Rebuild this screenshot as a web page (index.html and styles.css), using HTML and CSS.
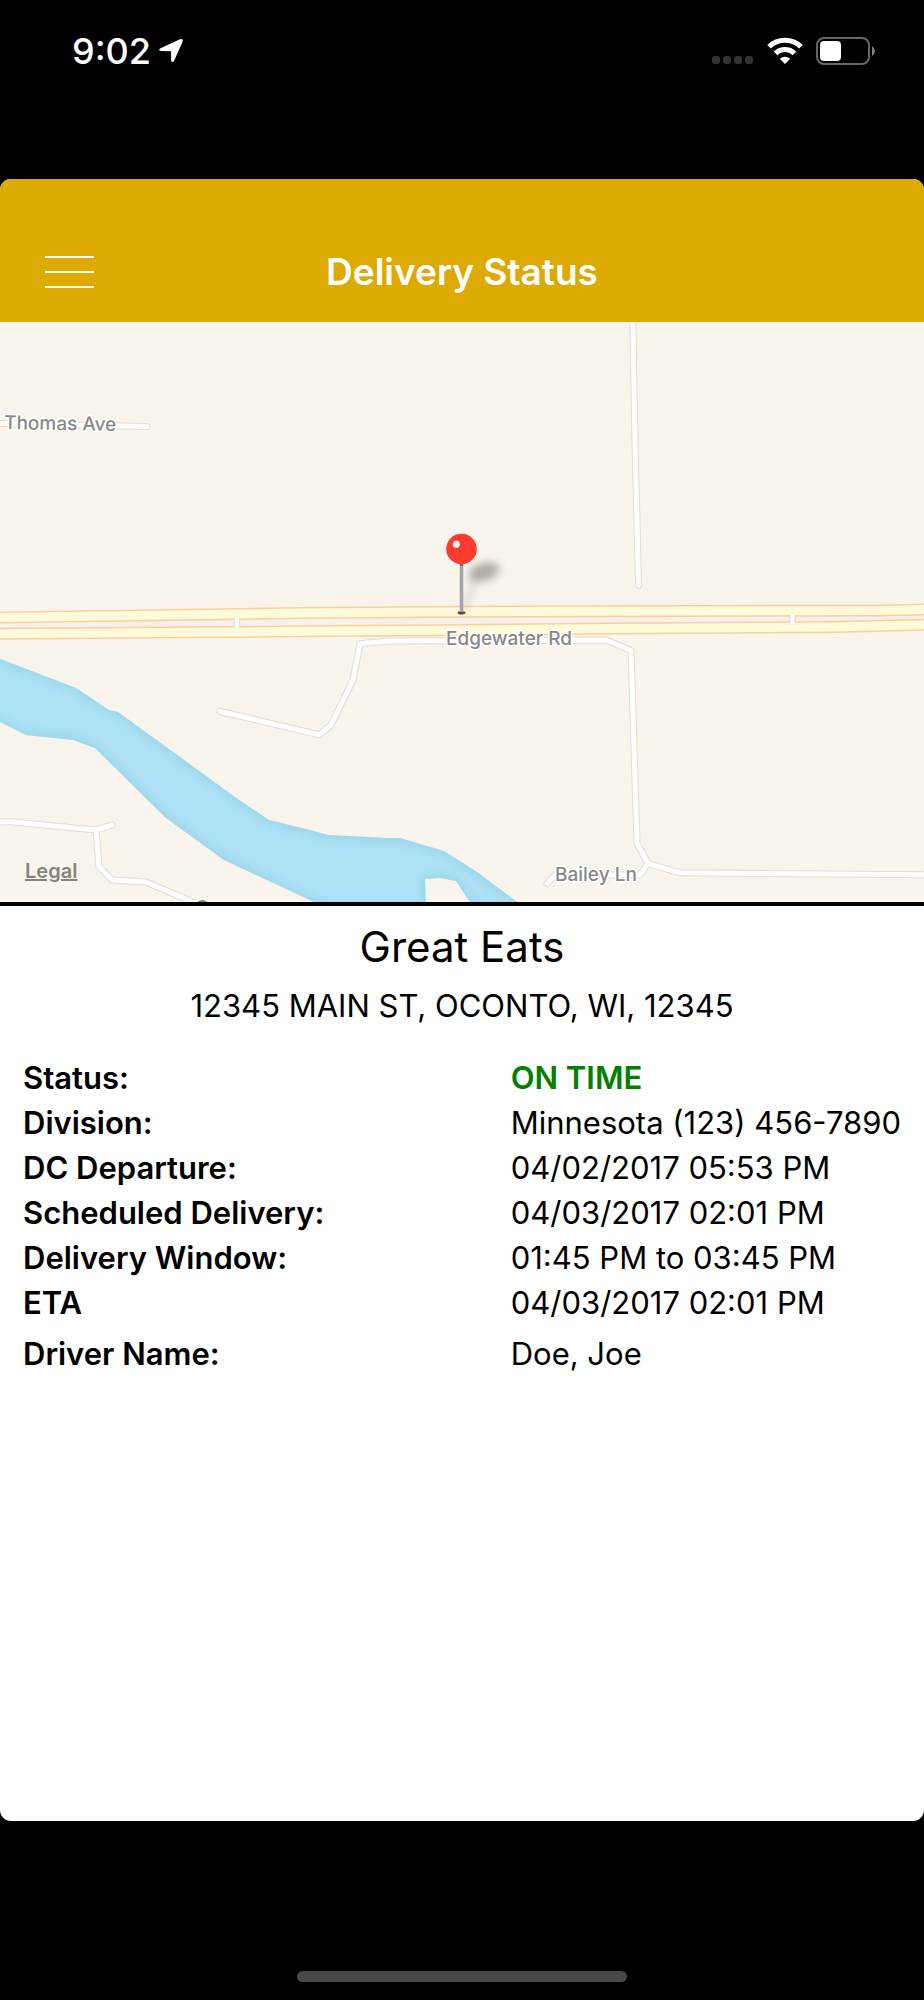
FILE: index.html
```html
<!DOCTYPE html>
<html lang="en">
<head>
    <meta charset="UTF-8">
    <meta name="viewport" content="width=device-width, initial-scale=1.0">
    <title>Delivery Status</title>
    <link rel="stylesheet" href="styles.css">
</head>
<body>

    <div class="status-bar">
        <div class="status-left">
            <span class="time">9:02</span>
            <svg class="icon-location" width="26" height="26" viewBox="0 0 26 26">
                <path d="M2 10.500L22 1.300Q25.400 0.300 24.600 3.700L16 23Q14.700 25 13.200 23L13 13.200L2.800 13Q0 12.300 2 10.500Z" fill="#fff"/>
            </svg>
        </div>
        <div class="status-right">
            <svg width="42" height="28" viewBox="0 0 42 28" fill="#333">
                <rect x="0" y="19" width="8" height="8" rx="3"/>
                <rect x="11" y="19" width="8" height="8" rx="3"/>
                <rect x="22" y="19" width="8" height="8" rx="3"/>
                <rect x="33" y="19" width="8" height="8" rx="3"/>
            </svg>
            <svg width="38" height="28" viewBox="0 0 38 28">
                <path d="M3 9.700A23 23 0 0 1 35 9.700" fill="none" stroke="#fff" stroke-width="5"/>
                <path d="M9.500 16.300A14 14 0 0 1 28.500 16.300" fill="none" stroke="#fff" stroke-width="5"/>
                <path d="M19 27L13.800 21.800A7.500 7.500 0 0 1 24.200 21.800Z" fill="#fff"/>
            </svg>
            <svg width="60" height="28" viewBox="0 0 60 28">
                <rect x="1" y="1" width="52" height="26" rx="7" fill="none" stroke="#666" stroke-width="2"/>
                <rect x="4" y="4" width="21" height="20" rx="4" fill="#fff"/>
                <path d="M56 9Q59 11 59 14Q59 17 56 19Z" fill="#808080"/>
            </svg>
        </div>
    </div>

    <div class="app">
        <header class="header">
            <button class="menu-button" type="button" aria-label="Menu">
                <span class="menu-line"></span>
                <span class="menu-line"></span>
                <span class="menu-line"></span>
            </button>
            <h1>Delivery Status</h1>
        </header>

        <div class="map">
            <svg class="map-canvas" viewBox="0 0 924 580" preserveAspectRatio="xMidYMid slice">
                <defs>
                    <path id="river" d="M-10 333L3 338L76 366L109 388L118 390L235 475L269 498L310 508L328 513L388 516L400 516L444 529L477 550L517 580L530 592L478 592L470 580L456 559L440 556L425 557L426 592L340 592L314 580L224 538L166 496L95 426L73 418L26 413L-10 395Z"/>
                    <clipPath id="river-clip"><use href="#river"/></clipPath>
                    <filter id="blur-edge"><feGaussianBlur stdDeviation="4"/></filter>
                    <filter id="blur-shadow" x="-50%" y="-50%" width="200%" height="200%"><feGaussianBlur stdDeviation="4"/></filter>
                    <path id="roads" d="M632.700 -8L635 118L638.500 263.500 M-8 101.300L147 104.500 M220 389.500L319 412.700L331 403L353 358L360 321.700L388 319L606 318L631 328.500L637 521L648 541.500L679 550.700L940 553 M648 541.500L640 552.700L555 553L547 561.500 M-8 500.500L8 499.500L96 508L112 503 M96 508L99 544.500L112 558L146 560L200 583"/>
                    <path id="highway" d="M-8 295.700L300 291L460 289.800L610 289.200L880 288.500L940 287 M-8 311.700L300 309.300L460 308L610 306.500L835 305L940 302.300"/>
                </defs>

                <!-- River -->
                <use href="#river" fill="#ade1f5"/>
                <g clip-path="url(#river-clip)">
                    <use href="#river" fill="none" stroke="#98d4e6" stroke-width="7" filter="url(#blur-edge)"/>
                </g>

                <!-- Small roads -->
                <use href="#roads" class="road-edge"/>
                <use href="#roads" class="road"/>

                <!-- Highway -->
                <path d="M-8 303.500L300 300L460 299L610 298L880 297L940 295" fill="none" stroke="#f6f1ea" stroke-width="12"/>
                <use href="#highway" class="highway-edge"/>
                <path d="M237 299V306M792.500 295V300" stroke="#e3dcd3" stroke-width="6.500"/>
                <use href="#highway" class="highway"/>
                <path d="M237 296V308M792.500 292V302" stroke="#fff" stroke-width="4"/>

                <!-- Street names -->
                <g class="street-name">
                    <text x="4" y="107" transform="rotate(1 4 107)">Thomas Ave</text>
                    <text x="446" y="323">Edgewater Rd</text>
                    <text x="555" y="559">Bailey Ln</text>
                    <text x="195" y="592">C</text>
                </g>

                <!-- Pin -->
                <ellipse cx="484" cy="250" rx="16" ry="9" transform="rotate(-15 484 250)" fill="#000" opacity="0.300" filter="url(#blur-shadow)"/>
                <path d="M463 290L475 258" stroke="#000" stroke-width="5" opacity="0.120" filter="url(#blur-shadow)"/>
                <ellipse cx="461.500" cy="290.700" rx="4" ry="1.800" fill="#55524a"/>
                <path d="M461.500 241V290" stroke="#a3a5a8" stroke-width="3.500"/>
                <path d="M461.500 241V244" stroke="#77777b" stroke-width="3.500"/>
                <circle cx="461.500" cy="227" r="15.300" fill="#ff3b30"/>
                <circle cx="456.300" cy="222.300" r="3.500" fill="#fff"/>
            </svg>
            <a class="legal" href="#legal">Legal</a>
        </div>

        <main class="details">
            <h2>Great Eats</h2>
            <p class="address">12345 MAIN ST, OCONTO, WI, 12345</p>
            <table class="info">
                <tr>
                    <th scope="row">Status:</th>
                    <td class="on-time">ON TIME</td>
                </tr>
                <tr>
                    <th scope="row">Division:</th>
                    <td>Minnesota (123) 456-7890</td>
                </tr>
                <tr>
                    <th scope="row">DC Departure:</th>
                    <td>04/02/2017 05:53 PM</td>
                </tr>
                <tr>
                    <th scope="row">Scheduled Delivery:</th>
                    <td>04/03/2017 02:01 PM</td>
                </tr>
                <tr>
                    <th scope="row">Delivery Window:</th>
                    <td>01:45 PM to 03:45 PM</td>
                </tr>
                <tr>
                    <th scope="row">ETA</th>
                    <td>04/03/2017 02:01 PM</td>
                </tr>
                <tr class="driver">
                    <th scope="row">Driver Name:</th>
                    <td>Doe, Joe</td>
                </tr>
            </table>
        </main>
    </div>

    <div class="home-area">
        <div class="home-indicator"></div>
    </div>

</body>
</html>
```
FILE: styles.css
```css
* {
    box-sizing: border-box;
}
body {
    font-family: Inter, "Liberation Sans", sans-serif;
    background-color: #000;
    color: #000;
    display: flex;
    flex-direction: column;
    min-height: 100vh;
    margin: 0;
}

/* Phone status bar */
.status-bar {
    display: flex;
    justify-content: space-between;
    align-items: flex-start;
    height: 179px;
    padding: 36px 48px 0 72px;
}
.status-left, .status-right {
    display: flex;
    align-items: center;
    height: 30px;
}
.status-left {
    gap: 7px;
}
.status-right {
    gap: 12px;
}
.time {
    color: #fff;
    font-size: 36px;
    font-weight: 500;
    line-height: 30px;
}

/* App card */
.app {
    flex: 1;
    background-color: #fff;
    border-radius: 11px;
    overflow: hidden;
}
.header {
    display: grid;
    grid-template-columns: 1fr auto 1fr;
    align-items: center;
    background-color: #dcaa00;
    height: 143px;
    padding: 43px 45px 0;
}
.header h1 {
    color: #fff;
    font-size: 37px;
    font-weight: 600;
    line-height: 44px;
    margin: 0;
}
.menu-button {
    display: flex;
    flex-direction: column;
    justify-content: space-between;
    width: 49px;
    height: 32px;
    padding: 0;
    background: none;
    border: none;
    cursor: pointer;
}
.menu-line {
    width: 100%;
    height: 2px;
    background-color: #fff;
}

/* Map */
.map {
    position: relative;
    background-color: #f9f5ed;
    border-bottom: 4px solid #000;
}
.map-canvas {
    display: block;
    width: 100%;
    height: 580px;
}
.road, .road-edge, .highway, .highway-edge {
    fill: none;
    stroke-linecap: round;
    stroke-linejoin: round;
}
.road-edge {
    stroke: #e3dcd2;
    stroke-width: 7px;
}
.road {
    stroke: #fff;
    stroke-width: 5px;
}
.highway-edge {
    stroke: #f9d09c;
    stroke-width: 12px;
}
.highway {
    stroke: #fdfbda;
    stroke-width: 9px;
}
.street-name {
    fill: #88888a;
    stroke: #fff;
    stroke-width: 3px;
    stroke-linejoin: round;
    paint-order: stroke;
    font-size: 19px;
    font-weight: 500;
}
.legal {
    position: absolute;
    left: 25px;
    bottom: 19px;
    color: #858580;
    font-size: 20px;
    font-weight: 600;
    line-height: 24px;
}

/* Delivery details */
.details {
    padding: 14px 23px 40px;
}
.details h2 {
    font-size: 42px;
    font-weight: 400;
    line-height: 54px;
    text-align: center;
    margin: 0;
}
.address {
    font-size: 31px;
    line-height: 45px;
    text-align: center;
    margin: 9px 0 27px;
}
.info {
    width: 100%;
    border-collapse: collapse;
    font-size: 31px;
    line-height: 45px;
}
.info th, .info td {
    padding: 0;
    text-align: left;
    white-space: nowrap;
}
.info th {
    width: 56%;
    font-weight: 600;
}
.info .on-time {
    color: #008000;
    font-weight: 600;
}
.info .driver th, .info .driver td {
    padding-top: 6px;
}

/* Home indicator */
.home-area {
    display: flex;
    justify-content: center;
    align-items: flex-end;
    height: 179px;
    padding-bottom: 18px;
}
.home-indicator {
    width: 330px;
    height: 11px;
    border-radius: 6px;
    background-color: #484848;
}
```
